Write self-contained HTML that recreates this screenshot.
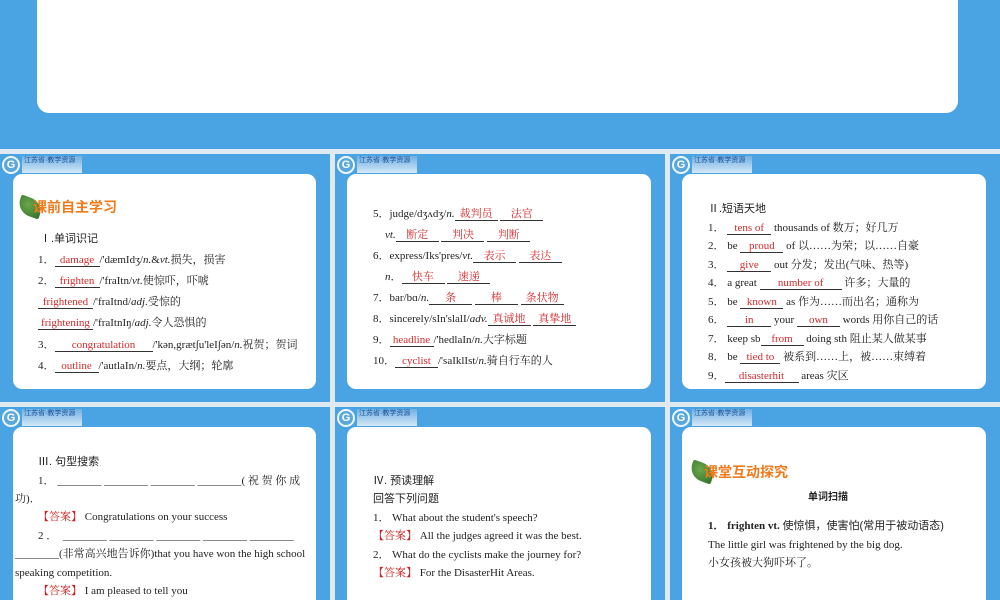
<!DOCTYPE html>
<html><head><meta charset="utf-8"><style>
*{margin:0;padding:0;box-sizing:border-box}
body{width:1000px;height:600px;overflow:hidden;background:#dfe9f1;position:relative;font-family:"Liberation Serif","Noto Serif CJK SC",serif;font-size:11px;color:#222}
.s{position:absolute;background:#4aa3e2;overflow:hidden}
.w{position:absolute;background:#fff;border-radius:9px}
.l{position:absolute;white-space:nowrap;line-height:14px}
.u{display:inline-block;border-bottom:1px solid #333;text-align:center;line-height:12px;color:#d42a2a}
.h{font-family:"Liberation Sans","Noto Sans CJK SC",sans-serif}
.t{font-family:"Liberation Sans","Noto Sans CJK SC",sans-serif;color:#f07a1a;font-weight:bold;font-size:14px}
.logo{position:absolute;left:2px;top:2px;width:18px;height:18px;border-radius:50%;background:#5aa8dc;border:2px solid #eef6fc;color:#fff;font:bold 11px/14px "Liberation Sans",sans-serif;text-align:center}
.ban{position:absolute;left:22px;top:2px;width:60px;height:17px;background:linear-gradient(#6fb0e4,#d4e8f6);font-size:7px;color:#1f4f96;line-height:10px;padding-left:2px;font-family:"Liberation Sans","Noto Sans CJK SC",sans-serif}
.leaf{position:absolute;width:24px;height:18px;background:radial-gradient(circle at 40% 40%,#6aa84a,#2f6e2a);border-radius:2px 14px 2px 14px;transform:rotate(20deg)}
.k{color:#c81e1e}
</style></head><body>
<div class="s" style="left:0;top:0;width:1000px;height:149px"><div class="w" style="left:37px;top:-10px;width:921px;height:123px;border-radius:12px"></div></div>

<div class="s" style="left:0;top:154px;width:330px;height:248px">
<div class="logo">G</div><div class="ban">江苏省·教学资源</div>
<div class="w" style="left:13px;top:20px;width:303px;height:215px"></div>
<div class="leaf" style="left:18px;top:44px"></div>
<div class="l t" style="left:33px;top:46px">课前自主学习</div>
<div class="l h" style="left:40px;top:78px">Ⅰ.单词识记</div>
<div class="l" style="left:38px;top:99px">1．<span class="u" style="width:45px">damage</span>/'dæmIdʒ/<i>n.</i>&amp;<i>vt.</i>损失，损害</div>
<div class="l" style="left:38px;top:120px">2．<span class="u" style="width:45px">frighten</span>/'fraItn/<i>vt.</i>使惊吓，吓唬</div>
<div class="l" style="left:38px;top:141px"><span class="u" style="width:55px">frightened</span>/'fraItnd/<i>adj.</i>受惊的</div>
<div class="l" style="left:38px;top:162px"><span class="u" style="width:55px">frightening</span>/'fraItnIŋ/<i>adj.</i>令人恐惧的</div>
<div class="l" style="left:38px;top:184px">3．<span class="u" style="width:98px">congratulation</span>/'kən,græt∫u'leI∫ən/<i>n.</i>祝贺；贺词</div>
<div class="l" style="left:38px;top:205px">4．<span class="u" style="width:44px">outline</span>/'autlaIn/<i>n.</i>要点，大纲；轮廓</div>
</div>

<div class="s" style="left:335px;top:154px;width:330px;height:248px">
<div class="logo">G</div><div class="ban">江苏省·教学资源</div>
<div class="w" style="left:12px;top:20px;width:304px;height:215px"></div>
<div class="l" style="left:38px;top:53px">5．judge/dʒʌdʒ/<i>n.</i><span class="u" style="width:43px">裁判员</span> <span class="u" style="width:43px">法官</span></div>
<div class="l" style="left:50px;top:74px"><i>vt.</i><span class="u" style="width:43px">断定</span> <span class="u" style="width:43px">判决</span> <span class="u" style="width:43px">判断</span></div>
<div class="l" style="left:38px;top:95px">6．express/Iks'pres/<i>vt.</i><span class="u" style="width:43px">表示</span> <span class="u" style="width:43px">表达</span></div>
<div class="l" style="left:50px;top:116px"><i>n</i>．<span class="u" style="width:43px">快车</span> <span class="u" style="width:43px">速递</span></div>
<div class="l" style="left:38px;top:137px">7．bar/bɑ/<i>n.</i><span class="u" style="width:43px">条</span> <span class="u" style="width:43px">棒</span> <span class="u" style="width:43px">条状物</span></div>
<div class="l" style="left:38px;top:158px">8．sincerely/sIn'slalI/<i>adv.</i><span class="u" style="width:43px">真诚地</span> <span class="u" style="width:43px">真挚地</span></div>
<div class="l" style="left:38px;top:179px">9．<span class="u" style="width:44px">headline</span>/'hedlaIn/<i>n.</i>大字标题</div>
<div class="l" style="left:38px;top:200px">10．<span class="u" style="width:43px">cyclist</span>/'saIklIst/<i>n.</i>骑自行车的人</div>
</div>

<div class="s" style="left:670px;top:154px;width:330px;height:248px">
<div class="logo">G</div><div class="ban">江苏省·教学资源</div>
<div class="w" style="left:12px;top:20px;width:304px;height:215px"></div>
<div class="l h" style="left:38px;top:48px">Ⅱ.短语天地</div>
<div class="l" style="left:38px;top:67px">1． <span class="u" style="width:44px">tens of</span> thousands of 数万；好几万</div>
<div class="l" style="left:38px;top:85px">2． be <span class="u" style="width:43px">proud</span> of 以……为荣；以……自豪</div>
<div class="l" style="left:38px;top:104px">3． <span class="u" style="width:44px">give</span> out 分发；发出(气味、热等)</div>
<div class="l" style="left:38px;top:122px">4． a great <span class="u" style="width:82px">number of</span> 许多；大量的</div>
<div class="l" style="left:38px;top:141px">5． be <span class="u" style="width:43px">known</span> as 作为……而出名；通称为</div>
<div class="l" style="left:38px;top:159px">6． <span class="u" style="width:44px">in</span> your <span class="u" style="width:43px">own</span> words 用你自己的话</div>
<div class="l" style="left:38px;top:178px">7． keep sb<span class="u" style="width:43px">from</span> doing sth 阻止某人做某事</div>
<div class="l" style="left:38px;top:196px">8． be <span class="u" style="width:40px">tied to</span> 被系到……上，被……束缚着</div>
<div class="l" style="left:38px;top:215px">9．<span class="u" style="width:74px">disasterhit</span> areas 灾区</div>
</div>

<div class="s" style="left:0;top:407px;width:330px;height:193px">
<div class="logo">G</div><div class="ban">江苏省·教学资源</div>
<div class="w" style="left:13px;top:20px;width:303px;height:200px"></div>
<div class="l h" style="left:38px;top:48px">Ⅲ. 句型搜索</div>
<div class="l" style="left:38px;top:67px;width:277px">1． ________ ________ ________ ________( 祝 贺 你 成</div>
<div class="l" style="left:15px;top:85px">功)．</div>
<div class="l" style="left:38px;top:103px"><span class="k">【答案】</span> Congratulations on your success</div>
<div class="l" style="left:38px;top:122px">2 ．&nbsp;&nbsp;________ ________ ________ ________ ________</div>
<div class="l" style="left:15px;top:140px">________(非常高兴地告诉你)that you have won the high school</div>
<div class="l" style="left:15px;top:159px">speaking competition.</div>
<div class="l" style="left:38px;top:177px"><span class="k">【答案】</span> I am pleased to tell you</div>
</div>

<div class="s" style="left:335px;top:407px;width:330px;height:193px">
<div class="logo">G</div><div class="ban">江苏省·教学资源</div>
<div class="w" style="left:12px;top:20px;width:304px;height:200px"></div>
<div class="l h" style="left:38px;top:67px">Ⅳ. 预读理解</div>
<div class="l h" style="left:38px;top:85px">回答下列问题</div>
<div class="l" style="left:38px;top:104px">1． What about the student's speech?</div>
<div class="l" style="left:38px;top:122px"><span class="k">【答案】</span> All the judges agreed it was the best.</div>
<div class="l" style="left:38px;top:141px">2． What do the cyclists make the journey for?</div>
<div class="l" style="left:38px;top:159px"><span class="k">【答案】</span> For the DisasterHit Areas.</div>
</div>

<div class="s" style="left:670px;top:407px;width:330px;height:193px">
<div class="logo">G</div><div class="ban">江苏省·教学资源</div>
<div class="w" style="left:12px;top:20px;width:304px;height:200px"></div>
<div class="leaf" style="left:20px;top:56px"></div>
<div class="l t" style="left:34px;top:58px">课堂互动探究</div>
<div class="l h" style="left:138px;top:84px;font-weight:bold;font-size:10px">单词扫描</div>
<div class="l" style="left:38px;top:112px"><b>1． frighten vt.</b> <span class="h">使惊惧，使害怕(常用于被动语态)</span></div>
<div class="l" style="left:38px;top:131px">The little girl was frightened by the big dog.</div>
<div class="l" style="left:38px;top:149px">小女孩被大狗吓坏了。</div>
</div>
</body></html>
